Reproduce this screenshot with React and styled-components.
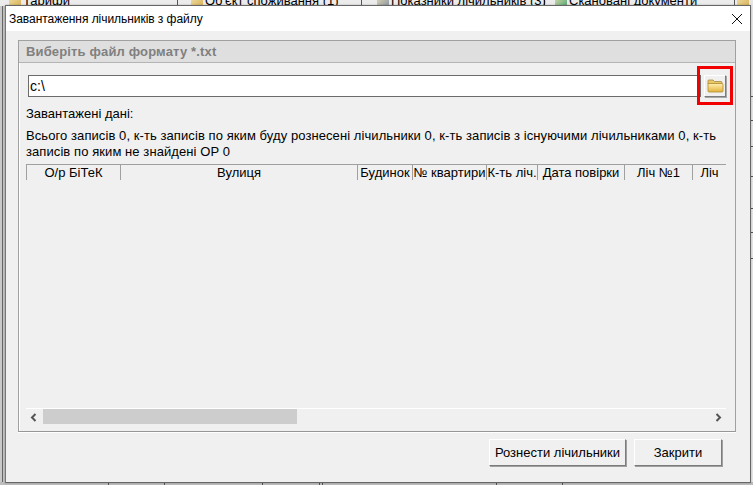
import styled, { createGlobalStyle } from "styled-components";

const GlobalStyle = createGlobalStyle`
  html, body {
    margin: 0;
    padding: 0;
    background: #c4c4c4;
  }
  * {
    box-sizing: border-box;
  }
`;

const columns = [
  { title: "О/р БіТеК", width: 95 },
  { title: "Вулиця", width: 237 },
  { title: "Будинок", width: 55 },
  { title: "№ квартири", width: 74 },
  { title: "К-ть ліч.", width: 51 },
  { title: "Дата повірки", width: 87 },
  { title: "Ліч №1", width: 68 },
  { title: "Ліч", width: 33, open: true },
];

const backTabs = [
  { title: "Тарифи", width: 178, pad: 23, icon: "#d9b45a" },
  { title: "Об'єкт споживання (1)", width: 184, pad: 27, icon: "#d9b45a" },
  { title: "Показники лічильників (3)", width: 183, pad: 29, icon: "#8c98a6" },
  { title: "Скановані документи", width: 190, pad: 24, icon: "#5aa878" },
  { title: "", width: 18, pad: 16, icon: "#d9b45a" },
];

const sideLines = [96, 120, 146, 176, 208, 232, 258];
const bottomCells = [
  { width: 109, dark: false },
  { width: 56, dark: true },
  { width: 98, dark: false },
  { width: 57, dark: true },
  { width: 3, dark: false },
  { width: 174, dark: false },
  { width: 66, dark: true },
];

const FolderIcon = () => (
  <svg width="17" height="14" viewBox="0 0 17 14">
    <defs>
      <linearGradient id="folderFront" x1="0" y1="0" x2="0" y2="1">
        <stop offset="0" stopColor="#fff0b0" />
        <stop offset="1" stopColor="#e3b23c" />
      </linearGradient>
    </defs>
    <path
      d="M1 3V1.8C1 1.2 1.4 1 2 1h4l1.5 1.5H14c.6 0 1 .4 1 1V5H1z"
      fill="#e8c868"
      stroke="#a98a3a"
      strokeWidth="0.8"
    />
    <path
      d="M1 4.5h14c.6 0 1 .4 1 1V12c0 .6-.4 1-1 1H2c-.6 0-1-.4-1-1z"
      fill="url(#folderFront)"
      stroke="#b08c30"
      strokeWidth="0.8"
    />
  </svg>
);

export default function App() {
  return (
    <Page>
      <GlobalStyle />
      <BackTabs>
        {backTabs.map((tab, i) => (
          <BackTab key={i} $width={tab.width} $pad={tab.pad}>
            <BackIcon $color={tab.icon} />
            {tab.title}
          </BackTab>
        ))}
      </BackTabs>
      <SideEdge>
        {sideLines.map((top) => (
          <SideTick key={top} $top={top} />
        ))}
      </SideEdge>
      <LeftEdge />
      <BottomEdge>
        {bottomCells.map((cell, i) => (
          <BottomCell key={i} $width={cell.width} $dark={cell.dark} />
        ))}
      </BottomEdge>

      <Dialog>
        <TitleBar>
          <Title>Завантаження лічильників з файлу</Title>
          <CloseIcon width="12" height="12" viewBox="0 0 12 12">
            <path d="M1 1l10 10M11 1L1 11" stroke="#111" strokeWidth="1" fill="none" />
          </CloseIcon>
        </TitleBar>
        <Body>
          <Group>
            <Legend>Виберіть файл формату *.txt</Legend>
            <GroupContent>
              <FileRow>
                <PathInput>c:\</PathInput>
                <FolderButton>
                  <FolderIcon />
                </FolderButton>
                <Highlight />
              </FileRow>
              <Caption>Завантажені дані:</Caption>
              <Summary>
                Всього записів 0, к-ть записів по яким буду рознесені лічильники 0, к-ть
                записів з існуючими лічильниками 0, к-ть записів по яким не знайдені ОР 0
              </Summary>
              <Table>
                <HeaderRow>
                  {columns.map((col) => (
                    <HeaderCell key={col.title} $width={col.width} $first={col.width === 95} $open={col.open}>
                      {col.title}
                    </HeaderCell>
                  ))}
                </HeaderRow>
                <TableBody />
                <ScrollBar>
                  <ScrollArrow width="7" height="9" viewBox="0 0 7 9">
                    <path d="M5.5 1L2 4.5 5.5 8" stroke="#555" strokeWidth="2" fill="none" />
                  </ScrollArrow>
                  <ScrollTrack>
                    <ScrollThumb />
                  </ScrollTrack>
                  <ScrollArrow width="7" height="9" viewBox="0 0 7 9">
                    <path d="M1.5 1L5 4.5 1.5 8" stroke="#555" strokeWidth="2" fill="none" />
                  </ScrollArrow>
                </ScrollBar>
              </Table>
            </GroupContent>
          </Group>
          <Footer>
            <ActionButton $width={137}>Рознести лічильники</ActionButton>
            <ActionButton $width={88}>Закрити</ActionButton>
          </Footer>
        </Body>
      </Dialog>
    </Page>
  );
}

const Page = styled.div`
  position: relative;
  width: 753px;
  height: 485px;
  overflow: hidden;
  background: #c4c4c4;
  font-family: "Liberation Sans", Arial, sans-serif;
  font-size: 13px;
  color: #000;
`;

const BackTabs = styled.div`
  display: flex;
  height: 6px;
  overflow: hidden;
  background: #ececec;
`;

const BackTab = styled.div`
  flex: none;
  display: flex;
  gap: 2px;
  width: ${(p) => p.$width}px;
  height: 20px;
  margin-top: -8px;
  padding-left: ${(p) => p.$pad - 14}px;
  border-right: 1px solid #555;
  font-size: 13px;
  line-height: 18px;
  white-space: nowrap;
`;

const BackIcon = styled.span`
  flex: none;
  width: 12px;
  height: 14px;
  background: linear-gradient(135deg, #f4e6b4, ${(p) => p.$color});
`;

const SideEdge = styled.div`
  position: absolute;
  top: 0;
  right: 0;
  width: 3px;
  height: 100%;
  background: #e6e6e6;
`;

const SideTick = styled.span`
  position: absolute;
  top: ${(p) => p.$top}px;
  left: 0;
  width: 3px;
  height: 1px;
  background: #555;
`;

const LeftEdge = styled.div`
  position: absolute;
  top: 6px;
  left: 0;
  width: 3px;
  height: 100%;
  background: #c9c9c9;
  border-right: 1px solid #666;
`;

const BottomEdge = styled.div`
  position: absolute;
  left: 0;
  right: 0;
  bottom: 0;
  display: flex;
  height: 3px;
  background: #bdbdbd;
`;

const BottomCell = styled.span`
  flex: none;
  width: ${(p) => p.$width}px;
  height: 3px;
  border-right: 1px solid #555;
  border-top: ${(p) => (p.$dark ? "1px solid #333" : "none")};
`;

const Dialog = styled.div`
  position: absolute;
  top: 5px;
  left: 5px;
  width: 746px;
  height: 478px;
  display: flex;
  flex-direction: column;
  background: #f0f0f0;
  border: 1px solid #666;
  border-left-color: #777;
  box-shadow: 0 0 2px rgba(0, 0, 0, 0.25);
`;

const TitleBar = styled.div`
  display: flex;
  align-items: center;
  justify-content: space-between;
  height: 25px;
  padding: 0 7px 0 3px;
  background: #fff;
`;

const Title = styled.div`
  font-size: 12px;
  letter-spacing: -0.05px;
`;

const CloseIcon = styled.svg`
  display: block;
`;

const Body = styled.div`
  flex: 1;
  display: flex;
  flex-direction: column;
  padding: 9px 0 0 12px;
`;

const Group = styled.div`
  width: 718px;
  height: 392px;
  display: flex;
  flex-direction: column;
  border: 1px solid #a0a0a0;
  border-bottom-color: #979797;
  box-shadow: inset 1px 0 0 #fff, 0 1px 0 #fff;
`;

const Legend = styled.div`
  height: 22px;
  padding-left: 7px;
  background: #dfdfdf;
  border-bottom: 1px solid #b4b4b4;
  color: #808080;
  font-size: 13px;
  font-weight: bold;
  line-height: 21px;
  letter-spacing: 0.15px;
`;

const GroupContent = styled.div`
  flex: 1;
  min-height: 0;
  display: flex;
  flex-direction: column;
  padding: 12px 8px 0 7px;
`;

const FileRow = styled.div`
  position: relative;
  display: flex;
  gap: 3px;
  height: 22px;
`;

const PathInput = styled.div`
  width: 673px;
  height: 22px;
  margin-left: 2px;
  padding-left: 1px;
  background: #fff;
  border: 1px solid #6b6b6b;
  font-size: 14px;
  line-height: 20px;
`;

const FolderButton = styled.div`
  width: 22px;
  height: 22px;
  display: flex;
  align-items: center;
  justify-content: center;
  background: #f0f0f0;
  border: 1px solid;
  border-color: #fff #7b7b7b #7b7b7b #fff;
  box-shadow: 1px 1px 0 #a8a8a8;
`;

const Highlight = styled.div`
  position: absolute;
  top: -9px;
  left: 671px;
  width: 36px;
  height: 39px;
  border: 3px solid #f00000;
`;

const Caption = styled.div`
  margin-top: 10px;
  height: 14px;
  line-height: 14px;
`;

const Summary = styled.div`
  margin-top: 7px;
  width: 700px;
  line-height: 16px;
  letter-spacing: 0.08px;
`;

const Table = styled.div`
  flex: 1;
  min-height: 0;
  display: flex;
  flex-direction: column;
  margin-top: 4px;
  width: 700px;
`;

const HeaderRow = styled.div`
  display: flex;
  height: 16px;
  overflow: hidden;
  border-top: 1px solid #a0a0a0;
`;

const HeaderCell = styled.div`
  flex: none;
  width: ${(p) => p.$width}px;
  border-left: ${(p) => (p.$first ? "1px solid #a0a0a0" : "none")};
  border-right: ${(p) => (p.$open ? "none" : "1px solid #a0a0a0")};
  text-align: center;
  line-height: 15px;
  white-space: nowrap;
`;

const TableBody = styled.div`
  flex: 1;
`;

const ScrollBar = styled.div`
  display: flex;
  align-items: center;
  height: 17px;
  border-top: 1px solid #fff;
  margin-bottom: 6px;
`;

const ScrollArrow = styled.svg`
  flex: none;
  display: block;
  margin: 0 4px;
`;

const ScrollTrack = styled.div`
  flex: 1;
  height: 16px;
  padding-left: 2px;
`;

const ScrollThumb = styled.div`
  width: 254px;
  height: 15px;
  background: #cdcdcd;
`;

const Footer = styled.div`
  display: flex;
  justify-content: flex-end;
  gap: 8px;
  width: 704px;
  margin-top: 7px;
`;

const ActionButton = styled.div`
  width: ${(p) => p.$width}px;
  height: 27px;
  display: flex;
  align-items: center;
  justify-content: center;
  background: #f0f0f0;
  border: 1px solid;
  border-color: #fff #7b7b7b #7b7b7b #fff;
  box-shadow: 1px 1px 0 #a0a0a0;
`;
